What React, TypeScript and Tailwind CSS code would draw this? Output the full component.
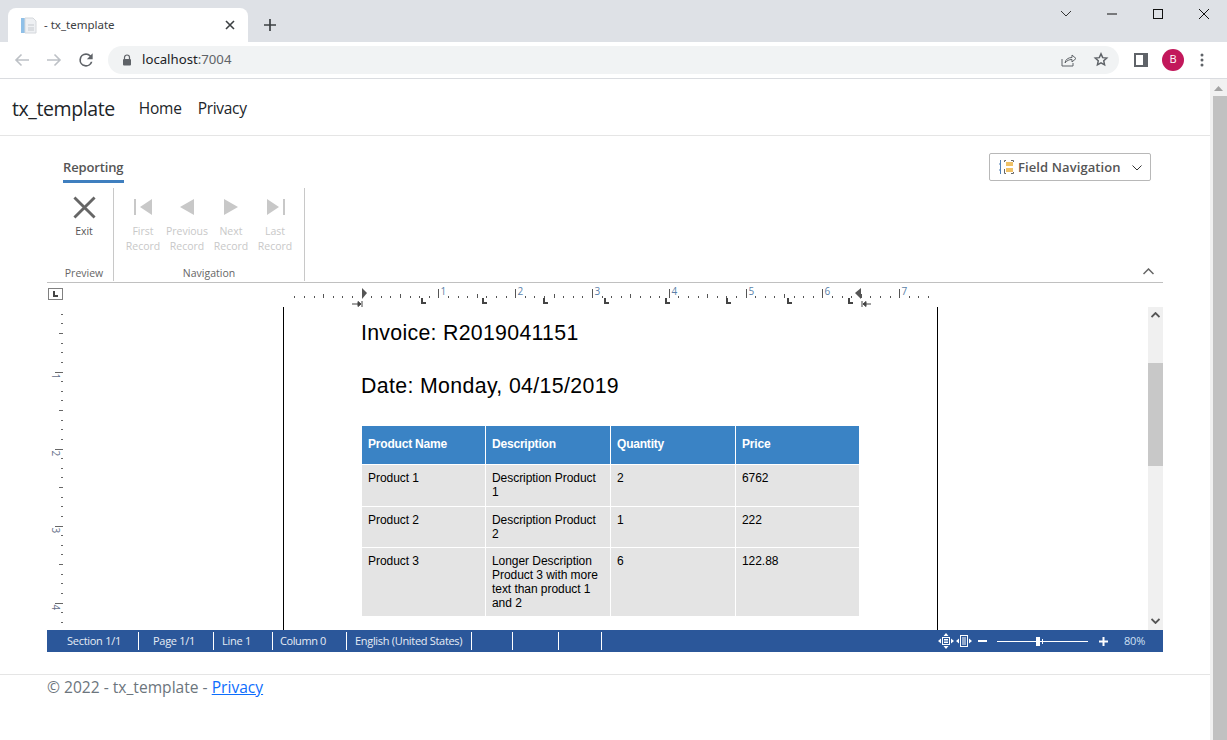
import React from "react";

const inch = 76.8;
const origin = 361.6 - 47;

function HRuler() {
  const ticks: React.ReactNode[] = [];
  for (let i = -7; i <= 59; i++) {
    const x = Math.round(origin + (i * inch) / 8) + 0.5;
    if (x < 245 || x > 885) continue;
    if (i % 8 === 0) {
      if (i !== 0) ticks.push(<line key={i} x1={x} x2={x} y1={6} y2={15} stroke="#555" />);
      if (i > 0)
        ticks.push(
          <text key={`t${i}`} x={x + 2} y={12} fontSize="10" fill="#5b7fa8" fontFamily="'Open Sans', sans-serif">
            {i / 8}
          </text>,
        );
    } else if (i % 4 === 0) {
      ticks.push(<line key={i} x1={x} x2={x} y1={11} y2={15} stroke="#555" />);
    } else {
      ticks.push(<line key={i} x1={x} x2={x} y1={13} y2={15} stroke="#555" />);
    }
  }
  const tabs = [375, 436, 497, 558, 619, 680, 741, 802];
  return (
    <svg width="1116" height="24" viewBox="0 0 1116 24" className="block">
      <rect x="1.5" y="5.5" width="14" height="11" fill="#fff" stroke="#808080" />
      <path d="M6 8v6h5v-2H8V8z" fill="#444" />
      {ticks}
      {tabs.map((x) => (
        <path key={x} d={`M${x - 1} 15h2v4h3v2h-5z`} fill="#444" />
      ))}
      <path d="M315 5l5 5-5 6z" fill="#555" />
      <path d="M305 21h9M314 21l-3-2.5v5z" stroke="#444" fill="#444" strokeWidth="1" />
      <path d="M315 18v6" stroke="#444" />
      <path d="M814 5l-6 5 6 6z" fill="#555" />
      <path d="M816 21h8M816 21l3-2.5v5z" stroke="#444" fill="#444" strokeWidth="1" />
      <path d="M815 18v6" stroke="#444" />
    </svg>
  );
}

function VRuler() {
  const ticks: React.ReactNode[] = [];
  const start = 371.5 - 307;
  for (let i = -6; i <= 27; i++) {
    const y = Math.round(start + (i * 77) / 8) + 0.5;
    if (y < 0 || y > 323) continue;
    if (i % 8 === 0) {
      ticks.push(<line key={i} x1={8} x2={16} y1={y} y2={y} stroke="#666" />);
      ticks.push(
        <text
          key={`t${i}`}
          x={0}
          y={0}
          fontSize="10"
          fill="#66708a"
          fontFamily="'Open Sans', sans-serif"
          transform={`translate(5 ${y + 1}) rotate(90)`}
        >
          {i / 8 + 1}
        </text>,
      );
    } else if (i % 4 === 0) {
      ticks.push(<line key={i} x1={12} x2={16} y1={y} y2={y} stroke="#666" />);
    } else {
      ticks.push(<line key={i} x1={14} x2={16} y1={y} y2={y} stroke="#666" />);
    }
  }
  return (
    <svg width="20" height="323" viewBox="0 0 20 323" className="block">
      {ticks}
    </svg>
  );
}

function NavBtn({ a, b, icon }: { a: string; b: string; icon: React.ReactNode }) {
  return (
    <div className="flex flex-col items-center w-[44px]">
      <div className="h-[36px] flex items-center justify-center pt-[2px]">{icon}</div>
      <div className="text-[10.5px] leading-[15px] text-[#c8c8c8] text-center">
        {a}
        <br />
        {b}
      </div>
    </div>
  );
}

const rows = [
  { h: "h-[41px]", n: "Product 1", d: "Description Product 1", q: "2", p: "6762" },
  { h: "h-[40px]", n: "Product 2", d: "Description Product 2", q: "1", p: "222" },
  { h: "h-[68px]", n: "Product 3", d: "Longer Description Product 3 with more text than product 1 and 2", q: "6", p: "122.88" },
];

const sep = "w-px h-[18px] bg-white";

export default function App() {
  return (
    <div className="w-[1227px] h-[740px] overflow-hidden bg-white flex flex-col font-['Open_Sans',sans-serif]">
      {/* tab strip */}
      <div className="h-[42px] bg-[#dee1e6] flex items-end pl-2 shrink-0">
        <div className="w-[240px] h-[34px] bg-white rounded-t-lg flex items-center pl-[12px] pr-[10px]">
          <svg width="17" height="17" viewBox="0 0 17 17">
            <rect x="1" y="1" width="4" height="15" fill="#8fc0e8" />
            <path d="M5 1h8l3 3v12H5z" fill="#eef0f3" stroke="#d5d8dc" />
            <path d="M8 8h6M8 11h6M8 13h6" stroke="#c5c9ce" />
          </svg>
          <span className="ml-[7px] text-[11.5px] text-[#3c4043] font-['Noto_Sans',sans-serif]">- tx_template</span>
          <svg width="10" height="10" viewBox="0 0 10 10" className="ml-auto mr-[3px]">
            <path d="M1 1l8 8M9 1l-8 8" stroke="#3c4043" strokeWidth="1.6" />
          </svg>
        </div>
        <svg width="14" height="14" viewBox="0 0 14 14" className="ml-[15px] mb-[10px]">
          <path d="M7 1v12M1 7h12" stroke="#3c4043" strokeWidth="1.7" />
        </svg>
        <div className="ml-auto self-start flex items-center h-[28px] pr-[18px]">
          <svg width="12" height="8" viewBox="0 0 12 8" className="mr-[35px]">
            <path d="M1 1l5 5 5-5" stroke="#333" fill="none" />
          </svg>
          <svg width="10" height="2" viewBox="0 0 10 2" className="mr-[36px]">
            <path d="M0 1h10" stroke="#111" />
          </svg>
          <svg width="10" height="10" viewBox="0 0 10 10" className="mr-[36px]">
            <rect x="0.5" y="0.5" width="9" height="9" fill="none" stroke="#111" />
          </svg>
          <svg width="10" height="10" viewBox="0 0 10 10">
            <path d="M0 0l10 10M10 0L0 10" stroke="#111" />
          </svg>
        </div>
      </div>
      {/* toolbar */}
      <div className="h-[37px] border-b border-[#dadce0] flex items-center shrink-0 pb-px">
        <svg width="16" height="14" viewBox="0 0 16 14" className="ml-[14px]">
          <path d="M15 7H2M7.5 1.5L2 7l5.5 5.5" stroke="#bdc1c6" strokeWidth="1.6" fill="none" />
        </svg>
        <svg width="16" height="14" viewBox="0 0 16 14" className="ml-[16px]">
          <path d="M1 7h13M8.5 1.5L14 7l-5.5 5.5" stroke="#bdc1c6" strokeWidth="1.6" fill="none" />
        </svg>
        <svg width="20" height="20" viewBox="0 0 24 24" className="ml-[14px]">
          <path
            fill="#5f6368"
            d="M17.65 6.35A7.96 7.96 0 0 0 12 4a8 8 0 1 0 7.73 10h-2.08A6 6 0 1 1 12 6c1.66 0 3.14.69 4.22 1.78L13 11h7V4l-2.35 2.35z"
          />
        </svg>
        <div className="ml-[12px] w-[1011px] h-[28px] bg-[#f1f3f4] rounded-full flex items-center pl-[14px] pr-[10px]">
          <svg width="10" height="12" viewBox="0 0 10 12">
            <path d="M2.5 5V3.5a2.5 2.5 0 0 1 5 0V5" stroke="#5f6368" strokeWidth="1.2" fill="none" />
            <rect x="1" y="5" width="8" height="6.5" rx="1" fill="#5f6368" />
          </svg>
          <span className="ml-[10px] pt-px text-[13.2px] text-[#202124] font-['Noto_Sans',sans-serif]">
            localhost<span className="text-[#5f6368]">:7004</span>
          </span>
          <svg width="16" height="14" viewBox="0 0 16 14" className="ml-auto">
            <path d="M1 6v7h11v-3" stroke="#5f6368" fill="none" />
            <path d="M4 10c.5-3.5 3-5.5 7-5.5V2l4 3.5L11 9V6.5c-3 0-5 1-7 3.5z" stroke="#5f6368" fill="none" />
          </svg>
          <svg width="16" height="15" viewBox="0 0 24 24" className="ml-[16px]">
            <path
              d="M12 3l2.7 6 6.5.7-4.8 4.4 1.3 6.4L12 17.3l-5.7 3.2 1.3-6.4L2.8 9.7 9.3 9z"
              fill="none"
              stroke="#5f6368"
              strokeWidth="2.4"
            />
          </svg>
        </div>
        <svg width="14" height="14" viewBox="0 0 14 14" className="ml-[15px]">
          <path d="M0 0h14v14H0z" fill="#5f6368" />
          <rect x="2" y="2" width="7" height="10" fill="#fff" />
        </svg>
        <div className="ml-[14px] w-[22px] h-[22px] rounded-full bg-[#c2185b] text-white text-[11px] flex items-center justify-center">
          B
        </div>
        <svg width="4" height="14" viewBox="0 0 4 14" className="ml-[16px]">
          <circle cx="2" cy="2" r="1.5" fill="#5f6368" />
          <circle cx="2" cy="7" r="1.5" fill="#5f6368" />
          <circle cx="2" cy="12" r="1.5" fill="#5f6368" />
        </svg>
      </div>

      <div className="flex-1 flex min-h-0">
        <div className="w-[1210px] flex flex-col">
          {/* nav */}
          <div className="h-[57px] border-b border-[#e5e5e5] flex items-center pl-3 pt-[3px] shrink-0">
            <span className="text-[19.5px] text-[#212529] tracking-[-0.4px]">tx_template</span>
            <span className="ml-[24px] text-[15.5px] text-[#212529] tracking-[-0.25px]">Home</span>
            <span className="ml-[16px] text-[15.5px] text-[#212529] tracking-[-0.3px]">Privacy</span>
          </div>

          <div className="px-[47px] flex flex-col shrink-0">
            {/* ribbon tabs */}
            <div className="h-[47px] flex justify-between items-start pl-4 pr-3 pt-[17px]">
              <div className="mt-[5px] border-b-[3px] border-[#3f7fbf] h-[25px] w-[61px] text-[13px] leading-[18px] font-semibold text-[#555] tracking-[-0.15px] whitespace-nowrap">
                Reporting
              </div>
              <div className="w-[162px] h-[28px] border border-[#b8b8b8] rounded-[2px] flex items-center pl-[9px] pr-[8px]">
                <svg width="15" height="16" viewBox="0 0 15 16">
                  <path d="M1.5 1v14M0 5h2M0 11h2" stroke="#4f7fb5" fill="none" />
                  <path d="M5.5 3V1.5H7M12 1.5h2.500V3M5.5 10v4.500H7M12 14.500h2.500V13" stroke="#666" fill="none" />
                  <rect x="7" y="3" width="7" height="4" fill="#efc166" />
                  <rect x="7" y="9" width="7" height="4" fill="#efc166" />
                </svg>
                <span className="ml-[4px] pt-[2px] text-[13px] font-semibold text-[#555] tracking-[0.1px] whitespace-nowrap">
                  Field Navigation
                </span>
                <svg width="10" height="6" viewBox="0 0 10 6" className="ml-auto mt-[2px]">
                  <path d="M0.5 0.5L5 5l4.5-4.5" stroke="#333" fill="none" />
                </svg>
              </div>
            </div>
            {/* ribbon body */}
            <div className="mt-[5px] h-[95px] border-b border-[#c0c0c0] flex pb-[1px]">
              <div className="w-[67px] border-r border-[#c8c8c8] flex flex-col items-center pl-[8px]">
                <div className="h-[36px] flex items-center justify-center pt-[2px]">
                  <svg width="23" height="23" viewBox="0 0 24 24">
                    <path d="M1.5 1.5l21 21M22.5 1.5l-21 21" stroke="#666" strokeWidth="3" />
                  </svg>
                </div>
                <div className="text-[10.5px] leading-[15px] text-[#555]">Exit</div>
                <div className="mt-auto text-[10.5px] leading-[15px] text-[#666]">Preview</div>
              </div>
              <div className="w-[191px] border-r border-[#c8c8c8] flex flex-col items-center">
                <div className="flex pl-[7px] w-full">
                  <NavBtn
                    a="First"
                    b="Record"
                    icon={
                      <svg width="19" height="16" viewBox="0 0 19 16">
                        <rect x="0" y="0" width="2" height="16" fill="#c8c8c8" />
                        <path d="M18 0v16L6 8z" fill="#c8c8c8" />
                      </svg>
                    }
                  />
                  <NavBtn
                    a="Previous"
                    b="Record"
                    icon={
                      <svg width="14" height="16" viewBox="0 0 14 16">
                        <path d="M14 0v16L0 8z" fill="#c8c8c8" />
                      </svg>
                    }
                  />
                  <NavBtn
                    a="Next"
                    b="Record"
                    icon={
                      <svg width="14" height="16" viewBox="0 0 14 16">
                        <path d="M0 0v16l14-8z" fill="#c8c8c8" />
                      </svg>
                    }
                  />
                  <NavBtn
                    a="Last"
                    b="Record"
                    icon={
                      <svg width="19" height="16" viewBox="0 0 19 16">
                        <rect x="17" y="0" width="2" height="16" fill="#c8c8c8" />
                        <path d="M1 0v16l12-8z" fill="#c8c8c8" />
                      </svg>
                    }
                  />
                </div>
                <div className="mt-auto text-[10.5px] leading-[15px] text-[#666]">Navigation</div>
              </div>
              <div className="flex-1 flex flex-col items-end justify-end pr-[9px] pb-[6px]">
                <svg width="11" height="7" viewBox="0 0 11 7">
                  <path d="M0.5 6L5.5 1l5 5" stroke="#666" strokeWidth="1.5" fill="none" />
                </svg>
              </div>
            </div>
            {/* top ruler */}
            <div className="h-[24px]">
              <HRuler />
            </div>
            {/* doc */}
            <div className="h-[323px] flex overflow-hidden">
              <div className="w-[236px] shrink-0 flex justify-end pr-[216px]">
                <VRuler />
              </div>
              <div className="w-[655px] shrink-0 border-x border-black pl-[77px] pt-[13px] font-['Liberation_Sans',sans-serif]">
                <div className="text-[21.3px] leading-[26px] tracking-[0.3px] text-black">Invoice: R2019041151</div>
                <div className="mt-[27px] text-[21.3px] leading-[26px] tracking-[0.36px] text-black">Date: Monday, 04/15/2019</div>
                <div className="mt-[27px] ml-px w-[497px] flex flex-col gap-px text-[12px] leading-[14px] text-black tracking-[-0.05px]">
                  <div className="h-[38px] grid grid-cols-[123px_124px_124px_123px] gap-px font-bold text-white tracking-[-0.2px]">
                    {["Product Name", "Description", "Quantity", "Price"].map((h) => (
                      <div key={h} className="bg-[#3a83c5] pl-[6px] pt-[11px]">
                        {h}
                      </div>
                    ))}
                  </div>
                  {rows.map((r) => (
                    <div key={r.n} className={`${r.h} grid grid-cols-[123px_124px_124px_123px] gap-px`}>
                      <div className="bg-[#e4e4e4] pl-[6px] pt-[6px]">{r.n}</div>
                      <div className="bg-[#e4e4e4] pl-[6px] pr-[10px] pt-[6px]">{r.d}</div>
                      <div className="bg-[#e4e4e4] pl-[6px] pt-[6px]">{r.q}</div>
                      <div className="bg-[#e4e4e4] pl-[6px] pt-[6px]">{r.p}</div>
                    </div>
                  ))}
                </div>
              </div>
              <div className="flex-1" />
              <div className="w-[15px] shrink-0 bg-[#f0f0f0] flex flex-col items-center">
                <svg width="9" height="6" viewBox="0 0 9 6" className="mt-[5px]">
                  <path d="M0.5 5L4.5 1l4 4" stroke="#555" strokeWidth="1.8" fill="none" />
                </svg>
                <div className="mt-[45px] w-full h-[103px] bg-[#c8c8c8]" />
                <svg width="9" height="6" viewBox="0 0 9 6" className="mt-auto mb-[6px]">
                  <path d="M0.5 1L4.5 5l4-4" stroke="#555" strokeWidth="1.8" fill="none" />
                </svg>
              </div>
            </div>
            {/* status */}
            <div className="h-[22px] bg-[#2b579a] flex items-center text-[11px] text-[#e6ecf5] whitespace-nowrap tracking-[-0.28px]">
              <span className="ml-[20px] w-[71px] pt-px">Section 1/1</span>
              <div className={sep} />
              <span className="ml-[14px] w-[60px] pt-px">Page 1/1</span>
              <div className={sep} />
              <span className="ml-[8px] w-[50px] pt-px">Line 1</span>
              <div className={sep} />
              <span className="ml-[7px] w-[66px] pt-px tracking-[-0.4px]">Column 0</span>
              <div className={sep} />
              <span className="ml-[8px] w-[116px] pt-px tracking-[-0.31px]">English (United States)</span>
              <div className={sep} />
              <div className="w-[40px]" />
              <div className={sep} />
              <div className="w-[45px]" />
              <div className={sep} />
              <div className="w-[42px]" />
              <div className={sep} />
              <svg width="16" height="16" viewBox="0 0 16 16" className="ml-[336px]">
                <rect x="4.5" y="4.5" width="7" height="7" fill="none" stroke="#fff" />
                <path d="M6 6.5h4M6 8h4M6 9.5h4" stroke="#fff" />
                <path d="M0 8l3-2.5v5zM16 8l-3-2.5v5zM8 0l2.5 3h-5zM8 16l2.5-3h-5z" fill="#fff" />
              </svg>
              <svg width="16" height="14" viewBox="0 0 16 14" className="ml-[2px]">
                <rect x="4.5" y="1.5" width="7" height="11" fill="none" stroke="#fff" />
                <path d="M6 4h4M6 6h4M6 8h4M6 10h4" stroke="#fff" />
                <path d="M0 7l3-2.5v5zM16 7l-3-2.5v5z" fill="#fff" />
              </svg>
              <div className="ml-[6px] w-[9px] h-[2px] bg-white" />
              <div className="ml-[10px] w-[91px] h-px bg-white relative">
                <div className="absolute left-[39px] -top-[4px] w-[4px] h-[9px] bg-white" />
                <div className="absolute left-[45px] -top-[2px] w-px h-[5px] bg-white" />
              </div>
              <svg width="9" height="9" viewBox="0 0 9 9" className="ml-[11px]">
                <path d="M4.5 0v9M0 4.5h9" stroke="#fff" strokeWidth="2" />
              </svg>
              <span className="ml-[16px] text-[#cfe0f5] pt-px tracking-[-0.2px]">80%</span>
            </div>
          </div>

          {/* footer */}
          <div className="mt-[22px] border-t border-[#e5e5e5] pl-[47px] text-[15.6px] leading-[24px] text-[#6c757d]">
            © 2022 - tx_template - <span className="text-[#0d6efd] underline">Privacy</span>
          </div>
        </div>
        {/* page scrollbar */}
        <div className="w-[17px] bg-[#f1f1f1] flex flex-col items-center">
          <svg width="9" height="5" viewBox="0 0 9 5" className="mt-[7px] mb-[5px]">
            <path d="M4.5 0L9 5H0z" fill="#a3a3a3" />
          </svg>
          <div className="flex-1 w-[14px] ml-[2px] bg-[#c1c1c1]" />
        </div>
      </div>
    </div>
  );
}
